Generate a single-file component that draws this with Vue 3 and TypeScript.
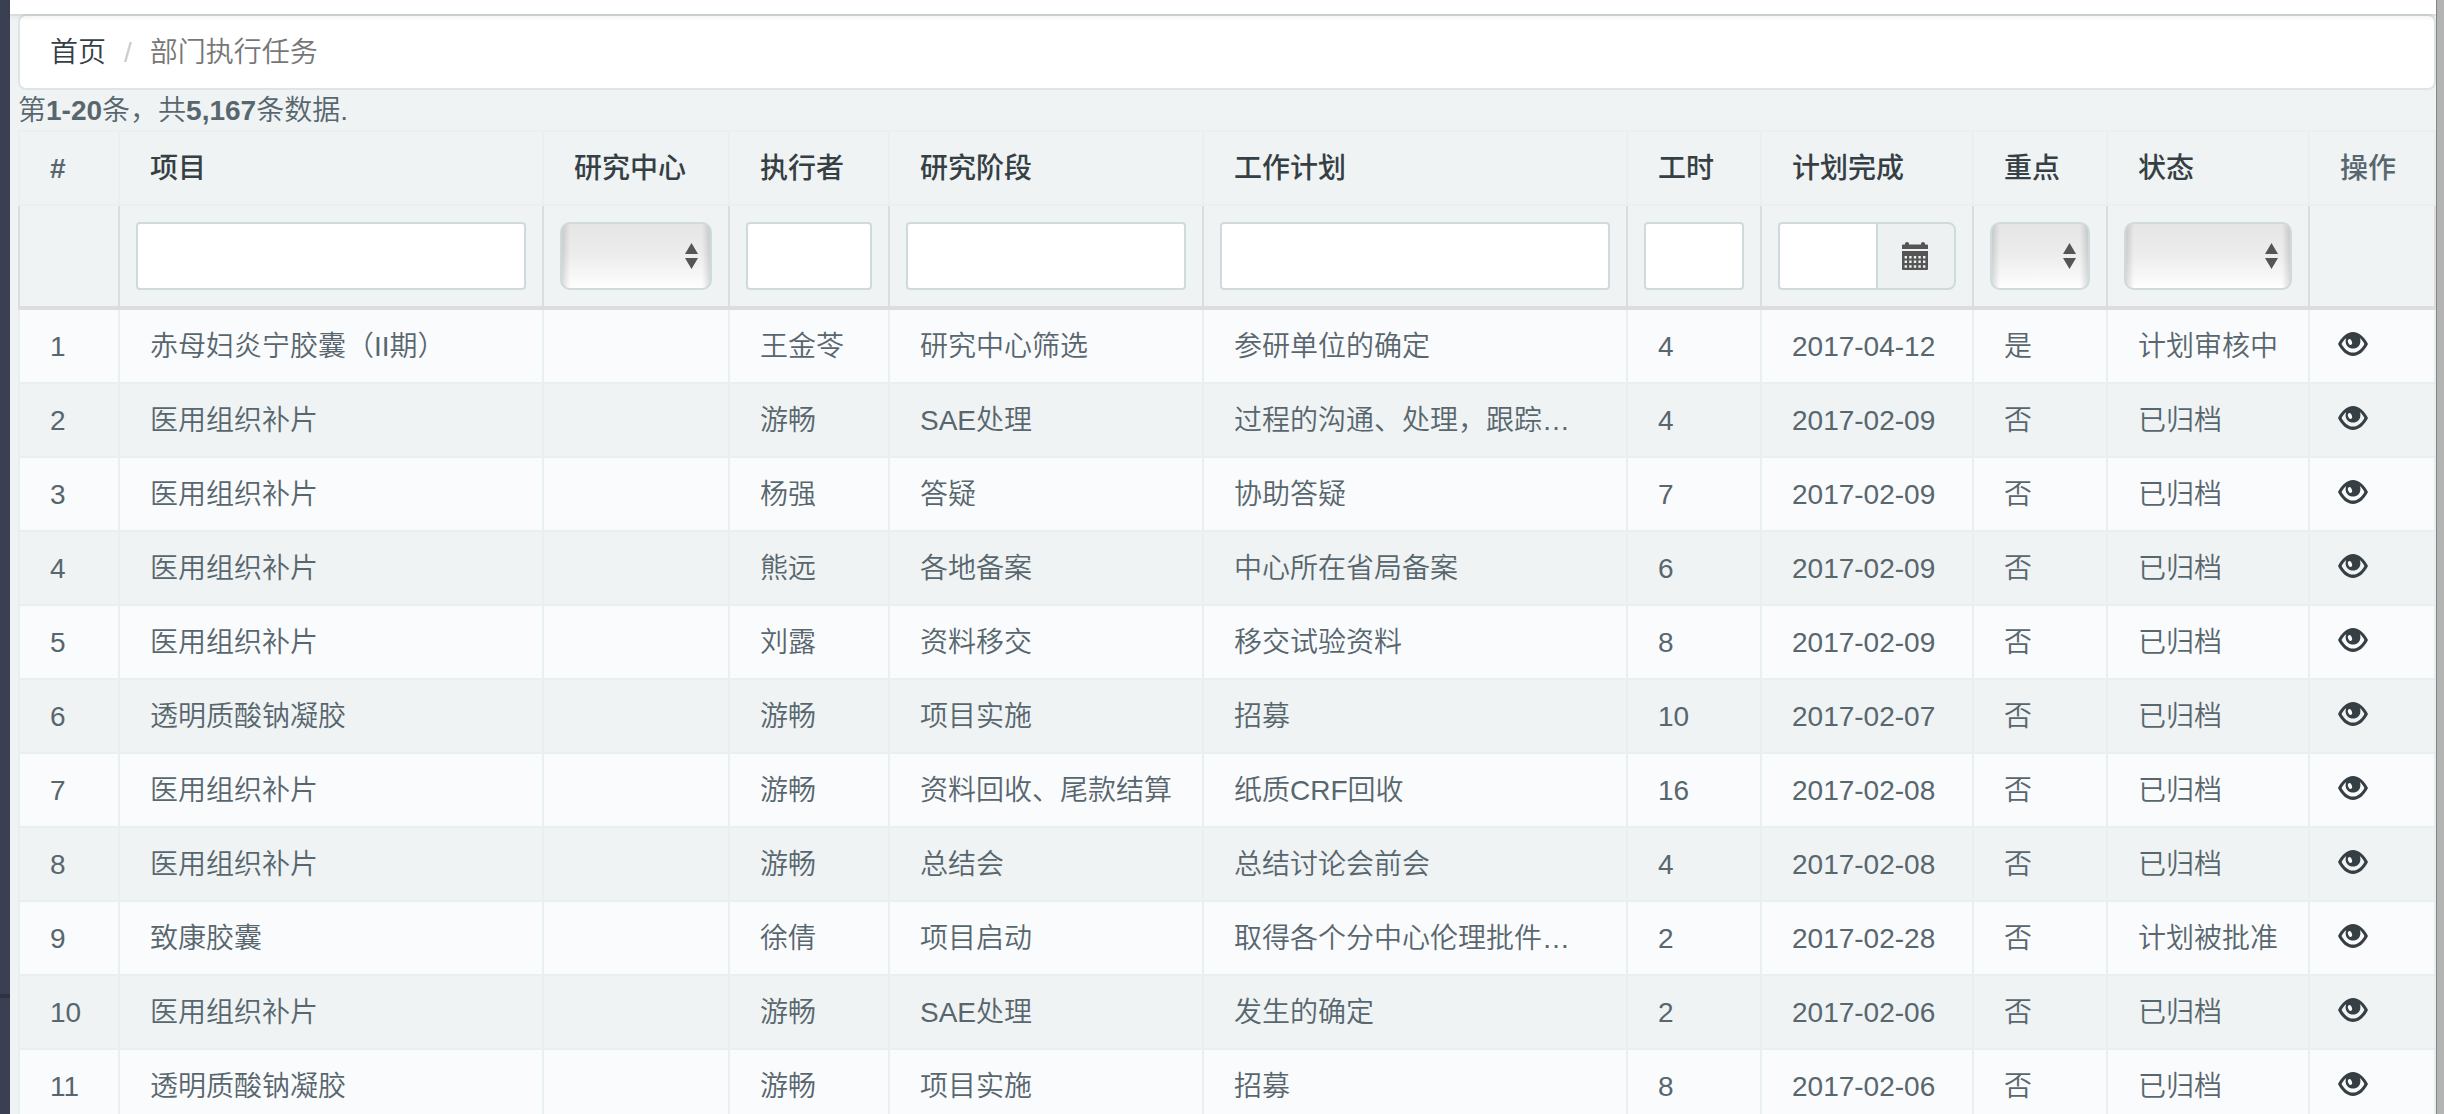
<script setup lang="ts">
interface Column {
  key: string
  title: string
  width: number
  sortable: boolean
  filter: 'none' | 'text' | 'select' | 'date'
}

interface Task {
  project: string
  owner: string
  stage: string
  plan: string
  hours: number
  due: string
  key: string
  status: string
}

const columns: Column[] = [
  { key: 'no', title: '#', width: 100, sortable: false, filter: 'none' },
  { key: 'project', title: '项目', width: 424, sortable: true, filter: 'text' },
  { key: 'center', title: '研究中心', width: 186, sortable: true, filter: 'select' },
  { key: 'owner', title: '执行者', width: 160, sortable: true, filter: 'text' },
  { key: 'stage', title: '研究阶段', width: 314, sortable: true, filter: 'text' },
  { key: 'plan', title: '工作计划', width: 424, sortable: true, filter: 'text' },
  { key: 'hours', title: '工时', width: 134, sortable: true, filter: 'text' },
  { key: 'due', title: '计划完成', width: 212, sortable: true, filter: 'date' },
  { key: 'key', title: '重点', width: 134, sortable: true, filter: 'select' },
  { key: 'status', title: '状态', width: 202, sortable: true, filter: 'select' },
  { key: 'action', title: '操作', width: 128, sortable: false, filter: 'none' },
]

function task(project: string, owner: string, stage: string, plan: string, hours: number, due: string, key = '否', status = '已归档'): Task {
  return { project, owner, stage, plan, hours, due, key, status }
}

const tasks: Task[] = [
  task('赤母妇炎宁胶囊（II期）', '王金苓', '研究中心筛选', '参研单位的确定', 4, '2017-04-12', '是', '计划审核中'),
  task('医用组织补片', '游畅', 'SAE处理', '过程的沟通、处理，跟踪…', 4, '2017-02-09'),
  task('医用组织补片', '杨强', '答疑', '协助答疑', 7, '2017-02-09'),
  task('医用组织补片', '熊远', '各地备案', '中心所在省局备案', 6, '2017-02-09'),
  task('医用组织补片', '刘露', '资料移交', '移交试验资料', 8, '2017-02-09'),
  task('透明质酸钠凝胶', '游畅', '项目实施', '招募', 10, '2017-02-07'),
  task('医用组织补片', '游畅', '资料回收、尾款结算', '纸质CRF回收', 16, '2017-02-08'),
  task('医用组织补片', '游畅', '总结会', '总结讨论会前会', 4, '2017-02-08'),
  task('致康胶囊', '徐倩', '项目启动', '取得各个分中心伦理批件…', 2, '2017-02-28', '否', '计划被批准'),
  task('医用组织补片', '游畅', 'SAE处理', '发生的确定', 2, '2017-02-06'),
  task('透明质酸钠凝胶', '游畅', '项目实施', '招募', 8, '2017-02-06'),
]
</script>

<template>
  <div class="shell" lang="zh-CN">
    <aside class="sidebar"><span class="divider"></span></aside>
    <div class="content">
      <header class="topbar"></header>
      <main class="main">
        <nav>
          <ol class="breadcrumb">
            <li><a href="#">首页</a></li>
            <li class="current">部门执行任务</li>
          </ol>
        </nav>
        <div class="summary">第<b>1-20</b>条，共<b>5,167</b>条数据.</div>
        <table class="grid">
          <colgroup>
            <col v-for="c in columns" :key="c.key" :style="{ width: c.width + 'px' }" />
          </colgroup>
          <thead>
            <tr class="titles">
              <th v-for="c in columns" :key="c.key" scope="col">
                <a v-if="c.sortable" href="#">{{ c.title }}</a>
                <template v-else>{{ c.title }}</template>
              </th>
            </tr>
            <tr class="filters">
              <td v-for="c in columns" :key="c.key">
                <input v-if="c.filter === 'text'" class="field" type="text" :aria-label="c.title" />
                <div v-else-if="c.filter === 'select'" class="picker">
                  <select :aria-label="c.title"><option value=""></option></select>
                  <svg class="arrows" viewBox="0 0 13 26" aria-hidden="true">
                    <path d="M6.500 0 13 11H0zM0 15h13L6.500 26z" />
                  </svg>
                </div>
                <div v-else-if="c.filter === 'date'" class="date">
                  <input class="field" type="text" :aria-label="c.title" />
                  <button type="button" aria-label="选择日期">
                    <svg class="calendar" viewBox="0 0 26 28" aria-hidden="true">
                      <path d="M1 2.500h2V1.500Q3 0 5 0t2 1.500V2.500h12V1.500Q19 0 21 0t2 1.500V2.500h2q1 0 1 1V7H0V3.500q0-1 1-1z" />
                      <path fill-rule="evenodd" d="M0 9h26v18q0 1-1 1H1q-1 0-1-1zM2.600 14v2.500h2.400V14zm4.600 0v2.500h2.400V14zm4.600 0v2.500h2.400V14zm4.600 0v2.500h2.400V14zm4.600 0v2.500h2.400V14zM2.600 18.600v2.500h2.400v-2.500zm4.600 0v2.500h2.400v-2.500zm4.600 0v2.500h2.400v-2.500zm4.600 0v2.500h2.400v-2.500zm4.600 0v2.500h2.400v-2.500zM2.600 23.200v2.500h2.400v-2.500zm4.600 0v2.500h2.400v-2.500zm4.600 0v2.500h2.400v-2.500zm4.600 0v2.500h2.400v-2.500zm4.600 0v2.500h2.400v-2.500z" />
                    </svg>
                  </button>
                </div>
              </td>
            </tr>
          </thead>
          <tbody>
            <tr v-for="(t, i) in tasks" :key="i">
              <td>{{ i + 1 }}</td>
              <td>{{ t.project }}</td>
              <td></td>
              <td>{{ t.owner }}</td>
              <td>{{ t.stage }}</td>
              <td>{{ t.plan }}</td>
              <td>{{ t.hours }}</td>
              <td>{{ t.due }}</td>
              <td>{{ t.key }}</td>
              <td>{{ t.status }}</td>
              <td class="action">
                <a href="#" aria-label="查看">
                  <svg viewBox="0 0 30 24" aria-hidden="true">
                    <path fill-rule="evenodd" d="M0 12C3.500 5 9 0 15 0s11.500 5 15 12c-3.500 7-9 12-15 12S3.500 19 0 12zM3.600 12C6 16.600 10 20.600 15 20.600s9-4 11.400-8.600c-1.200-2.500-2.700-4.500-4.600-6 .4 1 .6 2 .6 3.200 0 4.200-3.200 7.400-7.400 7.400s-7.400-3.200-7.400-7.400c0-1.200.2-2.200.6-3.200-1.900 1.500-3.400 3.500-4.600 6z" />
                    <ellipse class="glint" cx="12" cy="10" rx="1.900" ry="3" transform="rotate(-22 12 10)" />
                  </svg>
                </a>
              </td>
            </tr>
          </tbody>
        </table>
      </main>
    </div>
    <div class="edge"></div>
  </div>
</template>

<style>
body {
  margin: 0;
}
</style>

<style scoped>
.shell {
  display: flex;
  height: 100vh;
  overflow: hidden;
  background: #eff3f4;
  color: #58666e;
  font: 350 28px/40px "Liberation Sans", "Noto Sans CJK SC", sans-serif;
}

.shell * {
  box-sizing: border-box;
}

a {
  color: #363f44;
  text-decoration: none;
}

.sidebar {
  display: grid;
  flex: none;
  grid-template-rows: 994px 4px 1fr;
  width: 10px;
  background: #3a3f51;
}

.divider {
  grid-row: 2;
  background: #2e3344;
}

.content {
  flex: 1;
  min-width: 0;
}

.topbar {
  position: relative;
  height: 14px;
  background: #fff;
  box-shadow: 0 4px 4px rgba(0, 0, 0, 0.05), 0 2px 0 rgba(0, 0, 0, 0.05);
}

.main {
  padding-left: 8px;
}

.edge {
  flex: none;
  width: 8px;
  border-left: 1px solid #858585;
  background: #b5b4b4;
}

.breadcrumb {
  display: flex;
  margin: 0;
  padding: 17px 30px 15px;
  border: 2px solid #dee5e7;
  border-radius: 8px;
  background: #fff;
  list-style: none;
}

.current {
  color: #777;
}

.current::before {
  content: "/";
  padding: 0 18px;
  color: #ccc;
}

.summary {
  height: 40px;
  padding-top: 1px;
}

.summary b {
  font-weight: 700;
}

.grid {
  width: 100%;
  table-layout: fixed;
  border-spacing: 0;
  border-top: 2px solid #eaeff0;
}

.grid th,
.grid td {
  padding: 17px 0 15px 30px;
  border: 0 solid #eaeff0;
  border-width: 0 0 2px 2px;
  text-align: left;
  vertical-align: top;
  white-space: nowrap;
}

.grid th:last-child,
.grid td:last-child {
  border-right-width: 2px;
}

.grid th {
  font-weight: 500;
}

.grid th:first-child {
  font-weight: 700;
}

.grid .filters td {
  height: 104px;
  padding: 16px;
  border-color: #ddd;
  border-bottom-width: 4px;
}

.grid tbody td {
  border-color: #e8eff0;
}

.grid tbody tr:nth-child(odd) {
  background: #fafbfd;
}

.field {
  display: block;
  width: 100%;
  height: 68px;
  padding: 12px;
  border: 2px solid #cfdadd;
  border-radius: 4px;
  outline: 0;
  background: #fff;
  color: inherit;
  font: inherit;
}

.picker {
  position: relative;
}

.picker select {
  display: block;
  width: 100%;
  height: 68px;
  border: 2px solid #cfdadd;
  border-radius: 10px;
  outline: 0;
  appearance: none;
  background:
    linear-gradient(to right, rgba(0, 0, 0, 0.16), rgba(0, 0, 0, 0) 10px),
    linear-gradient(to left, rgba(0, 0, 0, 0.16), rgba(0, 0, 0, 0) 10px),
    linear-gradient(#e5e5e5, #ededed 50%, #fff);
  background-origin: border-box;
  color: inherit;
  font: inherit;
}

.arrows {
  position: absolute;
  top: 21px;
  right: 14px;
  width: 13px;
  height: 26px;
  fill: #555;
  pointer-events: none;
}

.date {
  display: flex;
}

.date .field {
  flex: 1;
  min-width: 0;
  border-right: 0;
  border-radius: 4px 0 0 4px;
}

.date button {
  display: flex;
  flex: none;
  align-items: center;
  justify-content: center;
  width: 80px;
  height: 68px;
  padding: 0 2px 0 0;
  border: 2px solid #cfdadd;
  border-radius: 0 8px 8px 0;
  background: #edf1f2;
}

.calendar {
  width: 26px;
  height: 28px;
  fill: #555;
}

.grid .action {
  padding-left: 28px;
}

.action a {
  display: flex;
  align-items: center;
  width: 30px;
  height: 34px;
}

.action svg {
  width: 30px;
  height: 24px;
  fill: #363f44;
}

.action .glint {
  fill: #fafbfd;
}
</style>
